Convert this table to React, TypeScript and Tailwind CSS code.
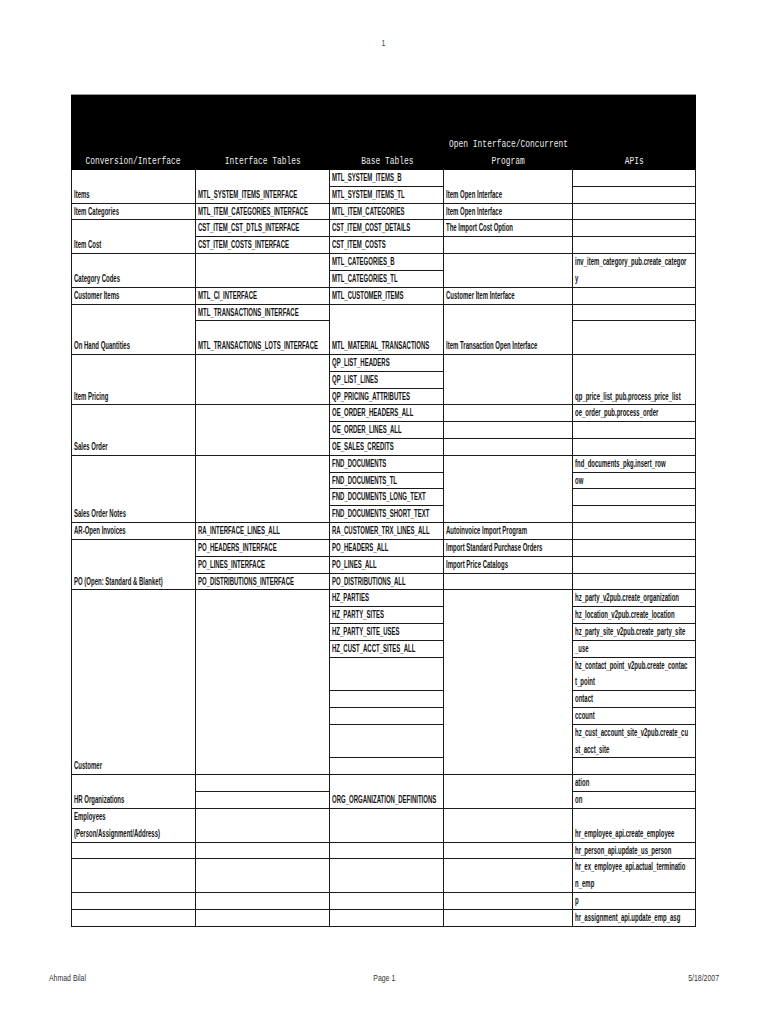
import React from 'react';

type Cell = [number, string[]];

const SPAN: Record<number, string> = {
  1: 'row-span-1',
  2: 'row-span-2',
  3: 'row-span-3',
  4: 'row-span-4',
  11: 'row-span-11',
};

const e = (n: number): Cell => [n, []];

const col1: Cell[] = [
  [2, ['Items']],
  [1, ['Item Categories']],
  [2, ['Item Cost']],
  [2, ['Category Codes']],
  [1, ['Customer Items']],
  [3, ['On Hand Quantities']],
  [3, ['Item Pricing']],
  [3, ['Sales Order']],
  [4, ['Sales Order Notes']],
  [1, ['AR-Open Invoices']],
  [3, ['PO (Open: Standard & Blanket)']],
  [11, ['Customer']],
  [2, ['HR Organizations']],
  [2, ['Employees', '(Person/Assignment/Address)']],
  e(1),
  e(2),
  e(1),
  e(1),
];

const col2: Cell[] = [
  [2, ['MTL_SYSTEM_ITEMS_INTERFACE']],
  [1, ['MTL_ITEM_CATEGORIES_INTERFACE']],
  [1, ['CST_ITEM_CST_DTLS_INTERFACE']],
  [1, ['CST_ITEM_COSTS_INTERFACE']],
  e(2),
  [1, ['MTL_CI_INTERFACE']],
  [1, ['MTL_TRANSACTIONS_INTERFACE']],
  [2, ['MTL_TRANSACTIONS_LOTS_INTERFACE']],
  e(3),
  e(3),
  e(4),
  [1, ['RA_INTERFACE_LINES_ALL']],
  [1, ['PO_HEADERS_INTERFACE']],
  [1, ['PO_LINES_INTERFACE']],
  [1, ['PO_DISTRIBUTIONS_INTERFACE']],
  e(11),
  e(1),
  e(1),
  e(2),
  e(1),
  e(2),
  e(1),
  e(1),
];

const col3: Cell[] = [
  [1, ['MTL_SYSTEM_ITEMS_B']],
  [1, ['MTL_SYSTEM_ITEMS_TL']],
  [1, ['MTL_ITEM_CATEGORIES']],
  [1, ['CST_ITEM_COST_DETAILS']],
  [1, ['CST_ITEM_COSTS']],
  [1, ['MTL_CATEGORIES_B']],
  [1, ['MTL_CATEGORIES_TL']],
  [1, ['MTL_CUSTOMER_ITEMS']],
  [3, ['MTL_MATERIAL_TRANSACTIONS']],
  [1, ['QP_LIST_HEADERS']],
  [1, ['QP_LIST_LINES']],
  [1, ['QP_PRICING_ATTRIBUTES']],
  [1, ['OE_ORDER_HEADERS_ALL']],
  [1, ['OE_ORDER_LINES_ALL']],
  [1, ['OE_SALES_CREDITS']],
  [1, ['FND_DOCUMENTS']],
  [1, ['FND_DOCUMENTS_TL']],
  [1, ['FND_DOCUMENTS_LONG_TEXT']],
  [1, ['FND_DOCUMENTS_SHORT_TEXT']],
  [1, ['RA_CUSTOMER_TRX_LINES_ALL']],
  [1, ['PO_HEADERS_ALL']],
  [1, ['PO_LINES_ALL']],
  [1, ['PO_DISTRIBUTIONS_ALL']],
  [1, ['HZ_PARTIES']],
  [1, ['HZ_PARTY_SITES']],
  [1, ['HZ_PARTY_SITE_USES']],
  [1, ['HZ_CUST_ACCT_SITES_ALL']],
  e(2),
  e(1),
  e(1),
  e(2),
  e(1),
  [2, ['ORG_ORGANIZATION_DEFINITIONS']],
  e(2),
  e(1),
  e(2),
  e(1),
  e(1),
];

const col4: Cell[] = [
  [2, ['Item Open Interface']],
  [1, ['Item Open Interface']],
  [1, ['The Import Cost Option']],
  e(1),
  e(2),
  [1, ['Customer Item Interface']],
  [3, ['Item Transaction Open Interface']],
  e(3),
  e(1),
  e(1),
  e(1),
  e(4),
  [1, ['Autoinvoice Import Program']],
  [1, ['Import Standard Purchase Orders']],
  [1, ['Import Price Catalogs']],
  e(1),
  e(11),
  e(2),
  e(2),
  e(1),
  e(2),
  e(1),
  e(1),
];

const col5: Cell[] = [
  e(1),
  e(1),
  e(1),
  e(1),
  e(1),
  [2, ['inv_item_category_pub.create_categor', 'y']],
  e(1),
  e(1),
  e(2),
  [3, ['qp_price_list_pub.process_price_list']],
  [1, ['oe_order_pub.process_order']],
  e(1),
  e(1),
  [1, ['fnd_documents_pkg.insert_row']],
  [1, ['ow']],
  e(1),
  e(1),
  e(1),
  e(1),
  e(1),
  e(1),
  [1, ['hz_party_v2pub.create_organization']],
  [1, ['hz_location_v2pub.create_location']],
  [1, ['hz_party_site_v2pub.create_party_site']],
  [1, ['_use']],
  [2, ['hz_contact_point_v2pub.create_contac', 't_point']],
  [1, ['ontact']],
  [1, ['ccount']],
  [2, ['hz_cust_account_site_v2pub.create_cu', 'st_acct_site']],
  e(1),
  [1, ['ation']],
  [1, ['on']],
  [2, ['hr_employee_api.create_employee']],
  [1, ['hr_person_api.update_us_person']],
  [2, ['hr_ex_employee_api.actual_terminatio', 'n_emp']],
  [1, ['p']],
  [1, ['hr_assignment_api.update_emp_asg']],
];

const columns = [col1, col2, col3, col4, col5];

const headers: string[][] = [
  ['Conversion/Interface'],
  ['Interface Tables'],
  ['Base Tables'],
  ['Open Interface/Concurrent', 'Program'],
  ['APIs'],
];

function BodyCell({ cell, first }: { cell: Cell; first: boolean }) {
  const [span, lines] = cell;
  return (
    <div
      className={`${SPAN[span]} ${first ? 'border-l' : ''} border-r border-b border-[#1a1a1a] overflow-hidden flex flex-col justify-end pl-[1.5px] pb-[2px]`}
    >
      {lines.map((t, i) => (
        <div key={i} className="h-[16.82px] shrink-0 leading-[16.82px] whitespace-nowrap">
          <span className="inline-block origin-left scale-x-[0.6] text-[10px] font-bold text-[#141414] font-['Liberation_Sans',Arial,sans-serif]">
            {t}
          </span>
        </div>
      ))}
    </div>
  );
}

export default function App() {
  return (
    <div className="w-[768px] h-[1024px] bg-white overflow-hidden flex flex-col">
      <div className="mt-[34px] h-[12px] leading-[12px] text-center">
        <span className="inline-block scale-x-[0.77] text-[9px] text-[#444] font-['Liberation_Sans',Arial,sans-serif]">
          1
        </span>
      </div>

      <div className="mt-[48px] ml-[71px] w-[625px] flex flex-col">
        <div className="grid grid-cols-[125px_134px_114px_129px_123px] h-[76px] bg-black border-t border-[#9a9a9a]">
          {headers.map((lines, i) => (
            <div key={i} className="flex flex-col justify-end items-center pb-[3px] overflow-hidden">
              {lines.map((t, j) => (
                <div key={j} className="h-[16.82px] leading-[16.82px] whitespace-nowrap">
                  <span className="inline-block origin-center scale-x-[0.72] text-[11px] text-[#ececec] font-['Liberation_Mono','Courier_New',monospace]">
                    {t}
                  </span>
                </div>
              ))}
            </div>
          ))}
        </div>

        <div className="grid grid-flow-col grid-cols-[125px_134px_114px_129px_123px] grid-rows-[repeat(45,16.82px)]">
          {columns.map((col, ci) =>
            col.map((cell, ri) => <BodyCell key={`${ci}-${ri}`} cell={cell} first={ci === 0} />)
          )}
        </div>
      </div>

      <div className="mt-[45px] h-[12px] px-[49px] grid grid-cols-3 leading-[12px] text-[#333] font-['Liberation_Sans',Arial,sans-serif] text-[9px]">
        <div className="text-left whitespace-nowrap">
          <span className="inline-block origin-left scale-x-[0.77]">Ahmad Bilal</span>
        </div>
        <div className="text-center whitespace-nowrap">
          <span className="inline-block origin-center scale-x-[0.77]">Page 1</span>
        </div>
        <div className="text-right whitespace-nowrap">
          <span className="inline-block origin-right scale-x-[0.77]">5/18/2007</span>
        </div>
      </div>
    </div>
  );
}
